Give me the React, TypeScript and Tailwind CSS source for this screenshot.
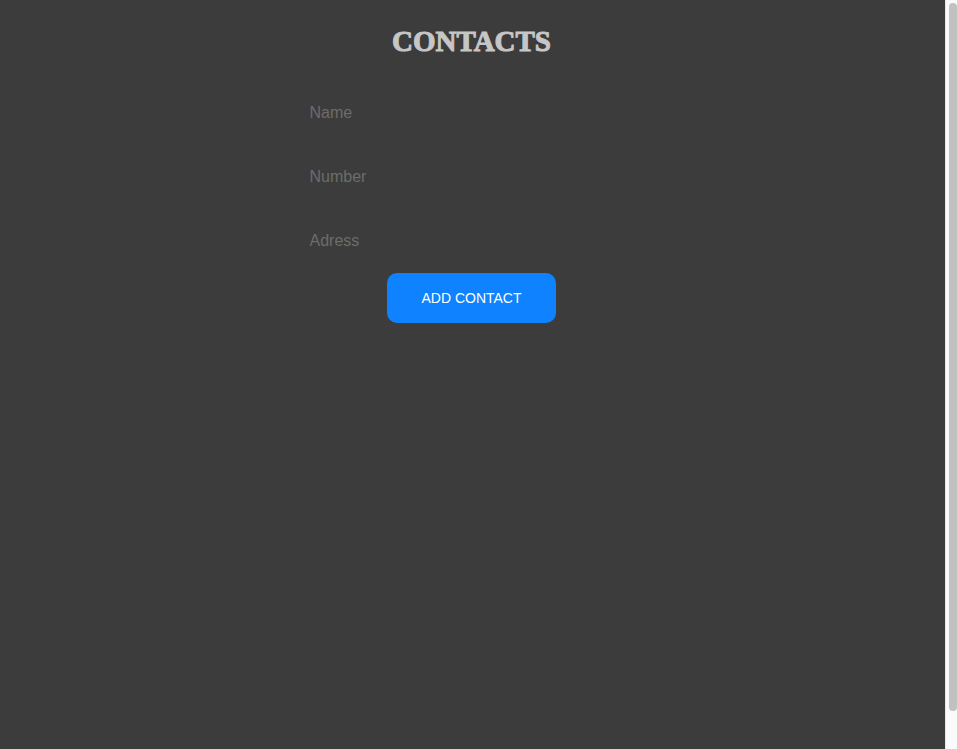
const fields = [
  { id: 'name', label: 'Name', type: 'text' },
  { id: 'number', label: 'Number', type: 'tel' },
  { id: 'address', label: 'Adress', type: 'text' },
];

export default function App() {
  return (
    <div className="flex h-screen bg-[#3c3c3c] font-['Liberation_Sans',Arial,sans-serif]">
      <main className="flex min-w-0 flex-1 flex-col items-center pt-5 pr-[2px]">
        <h1 className="font-['Liberation_Serif',serif] text-[29px] leading-[42px] font-bold text-[#c6c6c6] [-webkit-text-stroke:1px_#c6c6c6]">
          CONTACTS
        </h1>
        <form
          className="mt-[27px] flex w-full max-w-[344px] flex-col items-center"
          onSubmit={(event) => event.preventDefault()}
        >
          <div className="flex w-full flex-col gap-4">
            {fields.map((field) => (
              <input
                key={field.id}
                id={field.id}
                name={field.id}
                type={field.type}
                aria-label={field.label}
                placeholder={field.label}
                className="h-12 w-full bg-transparent px-[10px] text-base text-[#c6c6c6] outline-none placeholder:text-[#6c6c6c]"
              />
            ))}
          </div>
          <button
            type="submit"
            className="mt-2 h-[50px] w-[169px] rounded-[10px] bg-[#0f82ff] text-sm text-white"
          >
            ADD CONTACT
          </button>
        </form>
      </main>
      <div aria-hidden="true" className="w-3 shrink-0 border-l border-[#e8e8e8] bg-[#fafafa] pt-[3px] pl-[3px]">
        <div className="h-[708px] w-2 rounded-full bg-[#c1c1c1]" />
      </div>
    </div>
  );
}
